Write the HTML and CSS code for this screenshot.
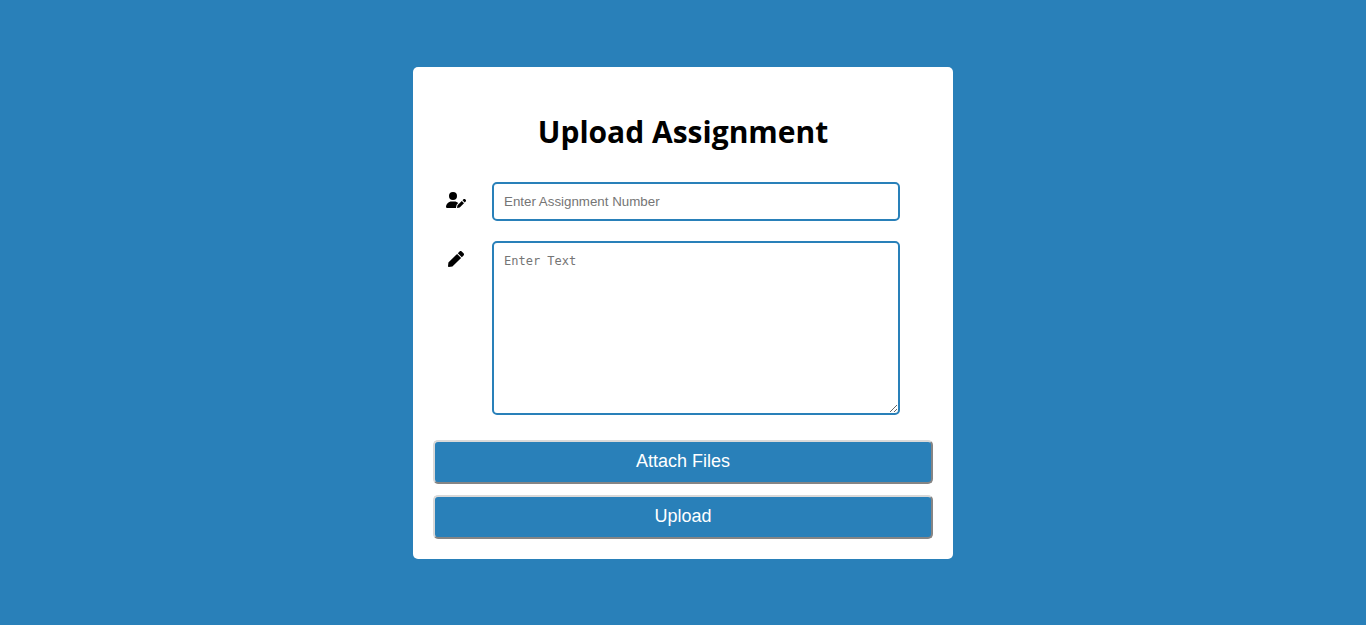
FILE: index.html
```html
<!DOCTYPE html>
<html lang="en">
<head>
<meta charset="utf-8">
<meta name="viewport" content="width=device-width, initial-scale=1">
<title>Upload Assignment</title>
<link rel="stylesheet" href="styles.css">
</head>
<body>
<main class="card">
  <h1 class="title">Upload Assignment</h1>
  <form class="form">
    <div class="field">
      <label class="icon" for="number" aria-label="Assignment number">
        <svg width="20" height="16" viewBox="0 0 640 512" aria-hidden="true"><path d="M224 256A128 128 0 1 0 224 0a128 128 0 1 0 0 256zm-45.700 48C79.800 304 0 383.800 0 482.300 0 498.700 13.300 512 29.700 512H322.800c-3.100-8.800-3.700-18.400-1.400-27.800l15-60.100c2.800-11.300 8.600-21.500 16.800-29.700l40.300-40.300c-32.100-31-75.700-50.100-123.900-50.100H178.300zM558 235.700l-29.400 29.400 71 71 29.400-29.400c15.600-15.600 15.600-40.900 0-56.600l-14.400-14.400c-15.600-15.600-40.900-15.600-56.600 0zM375.900 417c-4.100 4.100-7 9.200-8.400 14.900l-15 60.100c-1.400 5.500 .2 11.200 4.200 15.200s9.700 5.600 15.200 4.200l60.100-15c5.600-1.400 10.800-4.300 14.900-8.400L576.100 358.700l-71-71L375.900 417z"/></svg>
      </label>
      <input class="control" id="number" type="text" placeholder="Enter Assignment Number">
    </div>
    <div class="field">
      <label class="icon" for="details" aria-label="Assignment text">
        <svg width="16" height="16" viewBox="0 0 512 512" aria-hidden="true"><path d="M290.740 93.240l128.020 128.020-277.990 277.990-114.140 12.600C11.350 513.540-1.560 500.620.14 485.340l12.700-114.220 277.900-277.880zm207.200-19.060l-60.110-60.110c-18.750-18.750-49.160-18.750-67.910 0l-56.550 56.550 128.020 128.020 56.550-56.550c18.750-18.760 18.750-49.160 0-67.910z"/></svg>
      </label>
      <textarea class="control" id="details" rows="10" placeholder="Enter Text"></textarea>
    </div>
    <div class="actions">
      <button class="button" type="button">Attach Files</button>
      <button class="button" type="submit">Upload</button>
    </div>
  </form>
</main>
</body>
</html>
```
FILE: styles.css
```css
body {
  margin: 0;
  min-height: 100vh;
  display: flex;
  align-items: center;
  justify-content: center;
  background: #2980b9;
  font-family: "Segoe UI", "Open Sans", "Noto Sans", sans-serif;
}

.card {
  box-sizing: border-box;
  width: 100%;
  max-width: 540px;
  padding: 20px;
  border-radius: 5px;
  background: #fff;
}

.title {
  margin: 23px 0 29px;
  font-size: 30px;
  font-weight: 700;
  line-height: 43px;
  text-align: center;
}

.form {
  display: flex;
  flex-direction: column;
  gap: 20px;
}

.field {
  display: flex;
  padding-right: 33px;
}

.icon {
  display: flex;
  flex: none;
  justify-content: center;
  width: 46px;
  height: 16px;
  margin-right: 13px;
  padding-top: 10px;
}

.control {
  box-sizing: border-box;
  flex: 1;
  min-width: 0;
  padding: 10px;
  border: 2px solid #2980b9;
  border-radius: 5px;
  background: #fff;
  font-family: "Liberation Sans", Arial, sans-serif;
  line-height: 15px;
}

textarea.control {
  padding: 11px 10px 9px;
  font-family: "DejaVu Sans Mono", monospace;
  font-size: 12px;
}

.actions {
  display: flex;
  flex-direction: column;
  gap: 11px;
  padding-top: 5px;
}

.button {
  width: 100%;
  padding: 9px 10px 11px;
  border: 2px solid;
  border-color: #d9d9d9 #858585 #858585 #d9d9d9;
  border-radius: 5px;
  background: #2980b9;
  color: #fff;
  font-family: "Liberation Sans", Arial, sans-serif;
  font-size: 18px;
  line-height: 20px;
}
```
